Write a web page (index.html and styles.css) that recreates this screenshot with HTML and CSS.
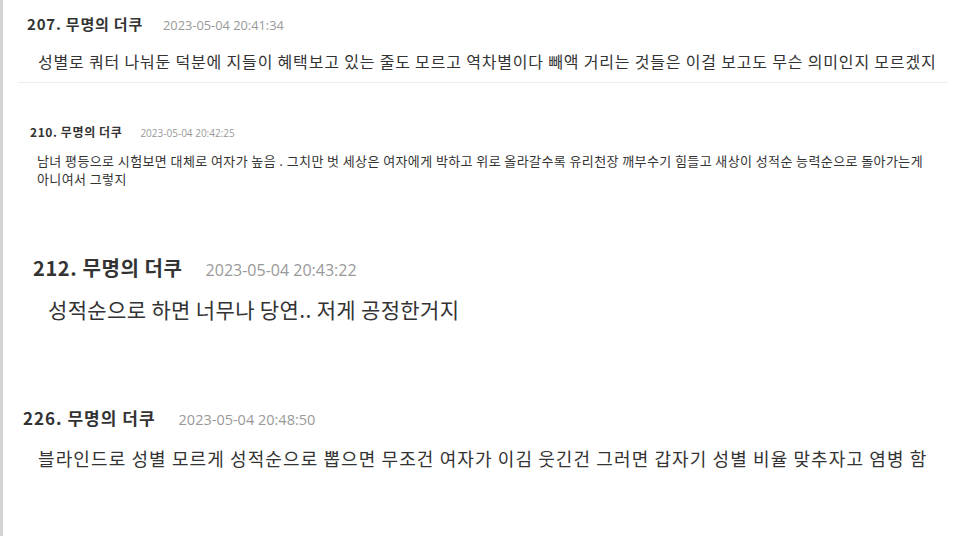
FILE: index.html
```html
<!DOCTYPE html>
<html>
<head>
    <meta charset="UTF-8">
    <title>댓글</title>
    <link rel="stylesheet" href="styles.css">
</head>
<body>
    <div class="page">
        <div class="cmt c1">
            <div class="head">
                <span class="name">207. 무명의 더쿠</span>
                <span class="date">2023-05-04 20:41:34</span>
            </div>
            <p class="text">성별로 쿼터 나눠둔 덕분에 지들이 혜택보고 있는 줄도 모르고 역차별이다 빼액 거리는 것들은 이걸 보고도 무슨 의미인지 모르겠지</p>
        </div>
        <div class="cmt c2">
            <div class="head">
                <span class="name">210. 무명의 더쿠</span>
                <span class="date">2023-05-04 20:42:25</span>
            </div>
            <p class="text">남녀 평등으로 시험보면 대체로 여자가 높음 . 그치만 벗 세상은 여자에게 박하고 위로 올라갈수록 유리천장 깨부수기 힘들고 새상이 성적순 능력순으로 돌아가는게 아니여서 그렇지</p>
        </div>
        <div class="cmt c3">
            <div class="head">
                <span class="name">212. 무명의 더쿠</span>
                <span class="date">2023-05-04 20:43:22</span>
            </div>
            <p class="text">성적순으로 하면 너무나 당연.. 저게 공정한거지</p>
        </div>
        <div class="cmt c4">
            <div class="head">
                <span class="name">226. 무명의 더쿠</span>
                <span class="date">2023-05-04 20:48:50</span>
            </div>
            <p class="text">블라인드로 성별 모르게 성적순으로 뽑으면 무조건 여자가 이김 웃긴건 그러면 갑자기 성별 비율 맞추자고 염병 함</p>
        </div>
    </div>
</body>
</html>
```

FILE: styles.css
```css
* {
    margin: 0;
    padding: 0;
}
body {
    font-family: "Noto Sans CJK KR", "Liberation Sans", sans-serif;
    background: #fff;
    color: #333;
}
.page {
    width: 959px;
    height: 536px;
    border-left: 3px solid #d4d4d4;
    overflow: hidden;
}
.cmt {
    box-sizing: border-box;
}
.cmt .head {
    display: flex;
    align-items: baseline;
}
.cmt .name {
    font-weight: bold;
    color: #333;
}
.cmt .date {
    font-family: "Open Sans", "Liberation Sans", sans-serif;
    color: #999;
}
.cmt .text {
    color: #333;
    word-break: keep-all;
}

/* 207 */
.c1 {
    height: 83px;
    margin: 0 14px 0 15px;
    padding: 14px 0 0 9px;
    border-bottom: 1px solid #ececec;
}
.c1 .head { gap: 20px; line-height: 20px; }
.c1 .name { font-size: 15px; letter-spacing: 0.8px; }
.c1 .date { font-size: 12.8px; }
.c1 .text {
    font-size: 16px;
    line-height: 22px;
    letter-spacing: 0.82px;
    margin: 15px 0 0 11px;
}

/* 210 */
.c2 {
    height: 127px;
    padding: 42px 14px 0 27px;
}
.c2 .head { gap: 18px; line-height: 14px; }
.c2 .name { font-size: 12px; letter-spacing: 0.6px; }
.c2 .date { font-size: 10px; }
.c2 .text {
    font-size: 13px;
    line-height: 18px;
    letter-spacing: 0.4px;
    margin: 12px 0 0 7px;
}

/* 212 */
.c3 {
    height: 150px;
    padding: 46px 0 0 30px;
}
.c3 .head { gap: 23px; line-height: 24px; }
.c3 .name { font-size: 20px; letter-spacing: 0.6px; }
.c3 .date { font-size: 16px; }
.c3 .text {
    font-size: 21px;
    line-height: 26px;
    letter-spacing: 0.35px;
    margin: 14px 0 0 15px;
}

/* 226 */
.c4 {
    padding: 48px 0 0 20px;
}
.c4 .head { gap: 23px; line-height: 20px; }
.c4 .name { font-size: 17px; letter-spacing: 1px; }
.c4 .date { font-size: 14.5px; }
.c4 .text {
    font-size: 18px;
    line-height: 22px;
    letter-spacing: 1.1px;
    margin: 17px 0 0 15px;
}
```
